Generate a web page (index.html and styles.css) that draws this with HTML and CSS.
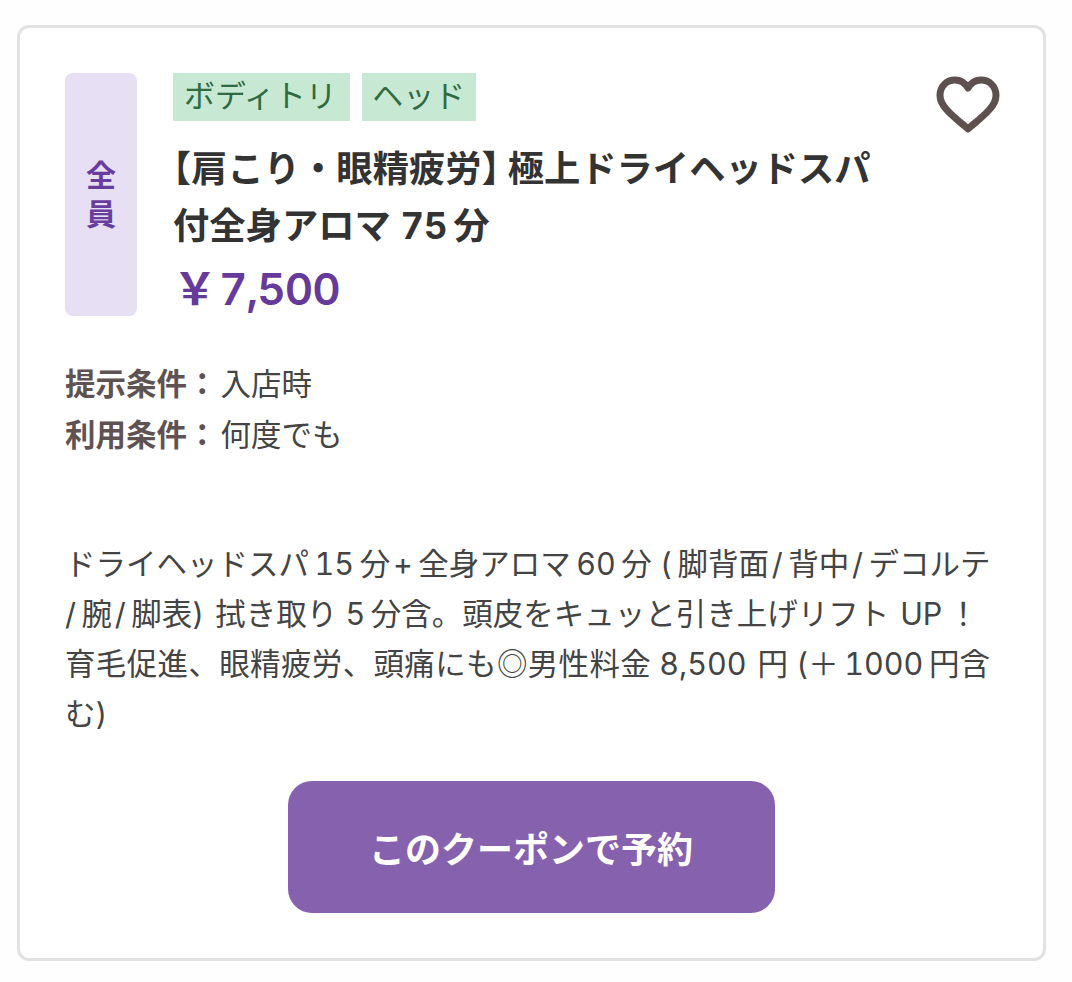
FILE: index.html
```html
<!DOCTYPE html>
<html lang="ja">
<head>
<meta charset="utf-8">
<title>クーポン</title>
<link rel="stylesheet" href="styles.css">
</head>
<body>
<article class="card">
  <header class="head">
    <div class="badge"><span>全</span><span>員</span></div>
    <div class="main">
      <div class="tags"><span class="tag">ボディトリ</span><span class="tag">ヘッド</span></div>
      <h2 class="title"><span class="open">【</span>肩こり・眼精疲労<span class="close">】</span>極上ドライヘッドスパ<br>付全身アロマ 75&#8201;分</h2>
      <p class="price"><span class="yen">￥</span>7,500</p>
    </div>
    <svg class="heart" viewBox="0 0 64 58" aria-label="お気に入り">
      <path d="M32 53 C26 47.500 17 41 10.500 33.500 C6 28.500 4 24.500 4 19.500 C4 10.500 10.500 4 19 4 C24.500 4 29 6.800 32 12 C35 6.800 39.500 4 45 4 C53.500 4 60 10.500 60 19.500 C60 24.500 58 28.500 53.500 33.500 C47 41 38 47.500 32 53 Z"/>
    </svg>
  </header>
  <dl class="conds">
    <div class="cond"><dt>提示条件：</dt><dd>入店時</dd></div>
    <div class="cond"><dt>利用条件：</dt><dd>何度でも</dd></div>
  </dl>
  <p class="desc">ドライヘッドスパ&#8201;15&#8201;分&#8202;+&#8201;全身アロマ&#8201;60&#8201;分 (&#8201;脚背面&#8202;/&#8201;背中&#8202;/&#8201;デコルテ<br>/&#8201;腕&#8202;/&#8201;脚表)&#8202; 拭き取り 5&#8201;分含。頭皮をキュッと引き上げリフト&#8202; UP&#8201;！<br><span class="wide">育毛促進、眼精疲労、頭痛にも◎男性料金</span> 8,500 &#8202;円 (＋&#8201;1000&#8201;円含<br>む)</p>
  <div class="actions"><a class="btn">このクーポンで予約</a></div>
</article>
</body>
</html>
```
FILE: styles.css
```css
* { box-sizing: border-box; }
html, body { margin: 0; padding: 0; background: #fefefe; }
body {
  padding: 25px 26px 21px 17px;
  font-family: "Inter", "Noto Sans CJK JP", sans-serif;
  font-variant-numeric: tabular-nums;
}
.card {
  height: 936px;
  background: #fff;
  border: 3px solid #e2e2e2;
  border-radius: 12px;
  padding: 45px 43px 45px 45px;
}
.head { display: flex; align-items: stretch; }
.badge {
  width: 72px;
  height: 243px;
  flex: none;
  background: #e7dff3;
  border-radius: 8px;
  color: #693d9e;
  font-size: 30px;
  font-weight: 700;
  line-height: 39px;
  display: flex;
  flex-direction: column;
  align-items: center;
  justify-content: center;
}
.main { flex: 1; margin-left: 36px; min-width: 0; }
.tags { display: flex; gap: 12px; }
.tag {
  height: 48px;
  padding: 0 10.500px;
  background: #c7e8d3;
  color: #2f6a40;
  font-size: 31px;
  line-height: 46px;
}
.tag:first-child { padding: 0 13px 0 11px; }
.title {
  margin: 20px 0 0;
  color: #333;
  font-size: 36.300px;
  font-weight: 700;
  line-height: 57px;
  white-space: nowrap;
}
.open, .close { font-feature-settings: "halt"; }
.close { margin-right: 8px; }
.price {
  margin: 4px 0 0;
  color: #663a9a;
  font-size: 44px;
  font-weight: 600;
  line-height: 60px;
  letter-spacing: -1px;
}
.yen { margin-right: 3px; }
.heart {
  flex: none;
  width: 64px;
  height: 58px;
  margin-top: 3px;
  fill: none;
  stroke: #5f5050;
  stroke-width: 7;
  stroke-linejoin: round;
}
.conds { margin: 39px 0 0; font-size: 30.500px; line-height: 51px; }
.cond { display: flex; }
.cond dt { color: #5f5252; font-weight: 700; }
.cond dd { margin: 0 0 0 3px; color: #444; }
.desc {
  margin: 79px 0 0;
  color: #444;
  font-size: 30.500px;
  line-height: 50px;
  white-space: nowrap;
}
.wide { letter-spacing: 0.350px; }
.actions { display: flex; justify-content: center; margin-top: 42px; }
.btn {
  display: flex;
  align-items: center;
  justify-content: center;
  width: 487px;
  height: 132px;
  margin-left: -3px;
  background: #8661ae;
  border-radius: 24px;
  color: #fff;
  font-size: 36px;
  font-weight: 700;
}
```
